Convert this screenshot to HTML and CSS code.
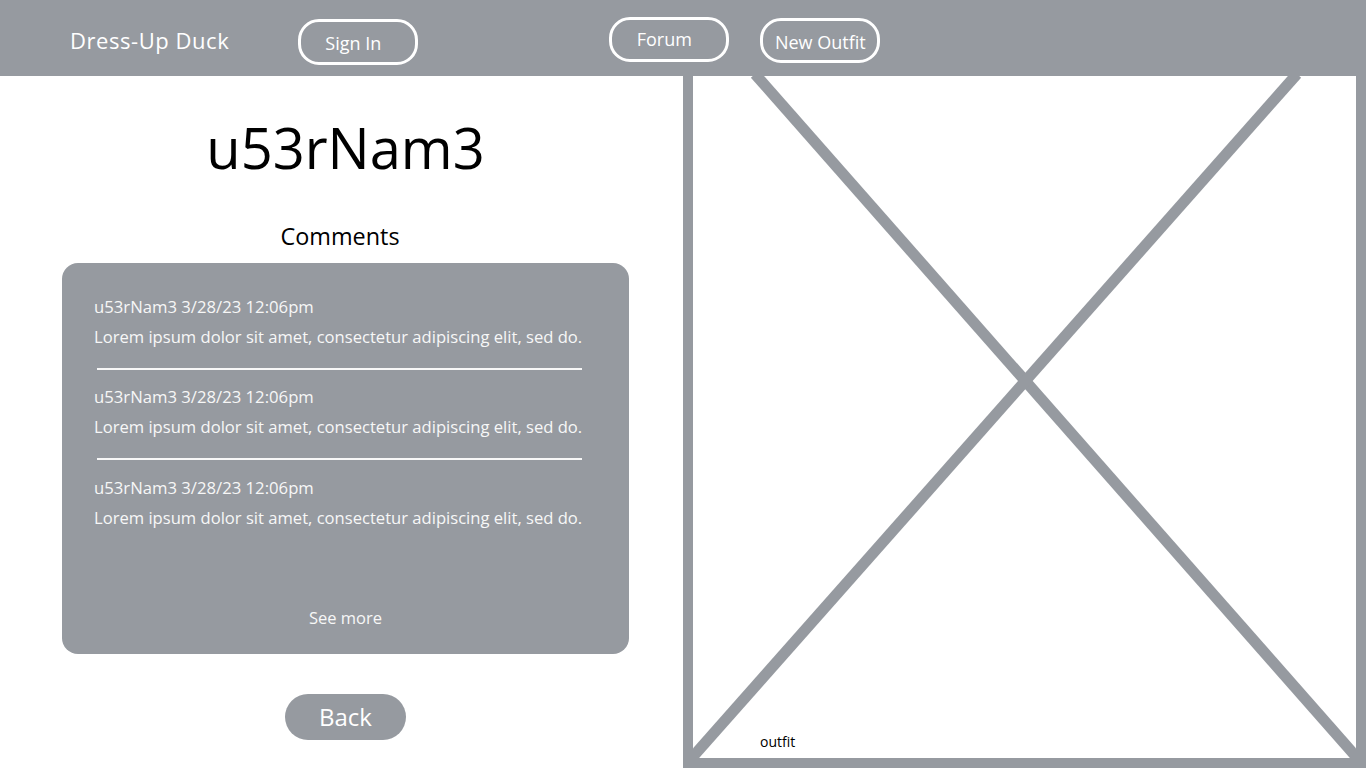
FILE: index.html
```html
<!DOCTYPE html>
<html lang="en">
<head>
<meta charset="utf-8">
<title>Dress-Up Duck</title>
<link rel="stylesheet" href="styles.css">
</head>
<body>
<header class="topbar">
  <div class="brand">Dress-Up Duck</div>
  <a class="pill pill-signin" href="#">Sign In</a>
  <a class="pill pill-forum" href="#">Forum</a>
  <a class="pill pill-new" href="#">New Outfit</a>
</header>
<main class="content">
  <section class="profile">
    <h1 class="username">u53rNam3</h1>
    <h2 class="comments-title">Comments</h2>
    <div class="comments-box">
      <div class="comment">
        <div class="meta">u53rNam3 3/28/23 12:06pm</div>
        <div class="body">Lorem ipsum dolor sit amet, consectetur adipiscing elit, sed do.</div>
      </div>
      <hr class="divider">
      <div class="comment">
        <div class="meta">u53rNam3 3/28/23 12:06pm</div>
        <div class="body">Lorem ipsum dolor sit amet, consectetur adipiscing elit, sed do.</div>
      </div>
      <hr class="divider">
      <div class="comment">
        <div class="meta">u53rNam3 3/28/23 12:06pm</div>
        <div class="body">Lorem ipsum dolor sit amet, consectetur adipiscing elit, sed do.</div>
      </div>
      <div class="see-more">See more</div>
    </div>
    <a class="back-btn" href="#">Back</a>
  </section>
  <section class="outfit-panel">
    <div class="outfit-canvas">
      <svg class="outfit-x" viewBox="0 0 663 682" preserveAspectRatio="none" aria-hidden="true">
        <line x1="62" y1="-2" x2="666" y2="684" />
        <line x1="604" y1="-2" x2="-3" y2="684" />
      </svg>
      <div class="outfit-label">outfit</div>
    </div>
  </section>
</main>
</body>
</html>
```
FILE: styles.css
```css
* {
  box-sizing: border-box;
}

html, body {
  margin: 0;
  padding: 0;
}

body {
  width: 1366px;
  height: 768px;
  overflow: hidden;
  background: #ffffff;
  font-family: "Open Sans", "Liberation Sans", sans-serif;
  color: #000;
}

.topbar {
  height: 76px;
  background: #969aa0;
  display: flex;
  align-items: flex-start;
  padding-left: 70px;
}

.brand {
  color: #ffffff;
  font-size: 22px;
  line-height: 30px;
  margin-top: 25px;
  letter-spacing: 0.55px;
}

.pill {
  display: flex;
  align-items: center;
  justify-content: center;
  width: 120px;
  height: 46px;
  border: 3px solid #ffffff;
  border-radius: 21px;
  color: #ffffff;
  text-decoration: none;
  font-size: 18px;
}

.pill-signin {
  margin-left: 69px;
  margin-top: 19px;
  padding-top: 2px;
  padding-right: 10px;
}

.pill-forum {
  margin-left: 191px;
  margin-top: 17px;
  height: 45px;
  padding-right: 10px;
  padding-bottom: 2px;
}

.pill-new {
  margin-left: 31px;
  margin-top: 18px;
  height: 45px;
  padding-top: 2px;
}

.content {
  display: flex;
  height: 692px;
}

.profile {
  width: 683px;
  padding: 0 54px 0 62px;
  display: flex;
  flex-direction: column;
  align-items: center;
}

.username {
  margin: 33px 0 0;
  font-weight: 400;
  font-size: 56px;
  line-height: 76px;
}

.comments-title {
  margin: 36px 11px 0 0;
  font-weight: 400;
  font-size: 23.4px;
  line-height: 30px;
}

.comments-box {
  margin-top: 12px;
  width: 567px;
  height: 391px;
  background: #969aa0;
  border-radius: 16px;
  padding: 29px 0 21px 0;
  display: flex;
  flex-direction: column;
  color: #f7f7f7;
}

.comment {
  padding-left: 32px;
}

.meta {
  font-size: 16.7px;
  line-height: 30px;
}

.body {
  font-size: 16.6px;
  line-height: 30px;
}

.divider {
  border: 0;
  height: 2px;
  background: #f7f7f7;
  margin: 16px 47px 12px 35px;
}

.divider + .comment + .divider + .comment {
  margin-top: 1px;
}

.see-more {
  margin-top: auto;
  text-align: center;
  font-size: 16.5px;
  line-height: 30px;
}

.back-btn {
  margin-top: 40px;
  width: 121px;
  height: 46px;
  border-radius: 23px;
  background: #969aa0;
  color: #ffffff;
  text-decoration: none;
  font-size: 24px;
  padding-bottom: 2px;
  display: flex;
  align-items: center;
  justify-content: center;
}

.outfit-panel {
  width: 683px;
  height: 692px;
  background: #969aa0;
  padding: 0 10px 10px 10px;
}

.outfit-canvas {
  position: relative;
  width: 100%;
  height: 100%;
  background: #ffffff;
  overflow: hidden;
  display: flex;
  flex-direction: column;
  justify-content: flex-end;
}

.outfit-x {
  position: absolute;
  inset: 0;
  width: 100%;
  height: 100%;
}

.outfit-x line {
  stroke: #969aa0;
  stroke-width: 11;
}

.outfit-label {
  position: relative;
  padding: 0 0 6px 67px;
  font-size: 14px;
  line-height: 20px;
  color: #000;
}
```
